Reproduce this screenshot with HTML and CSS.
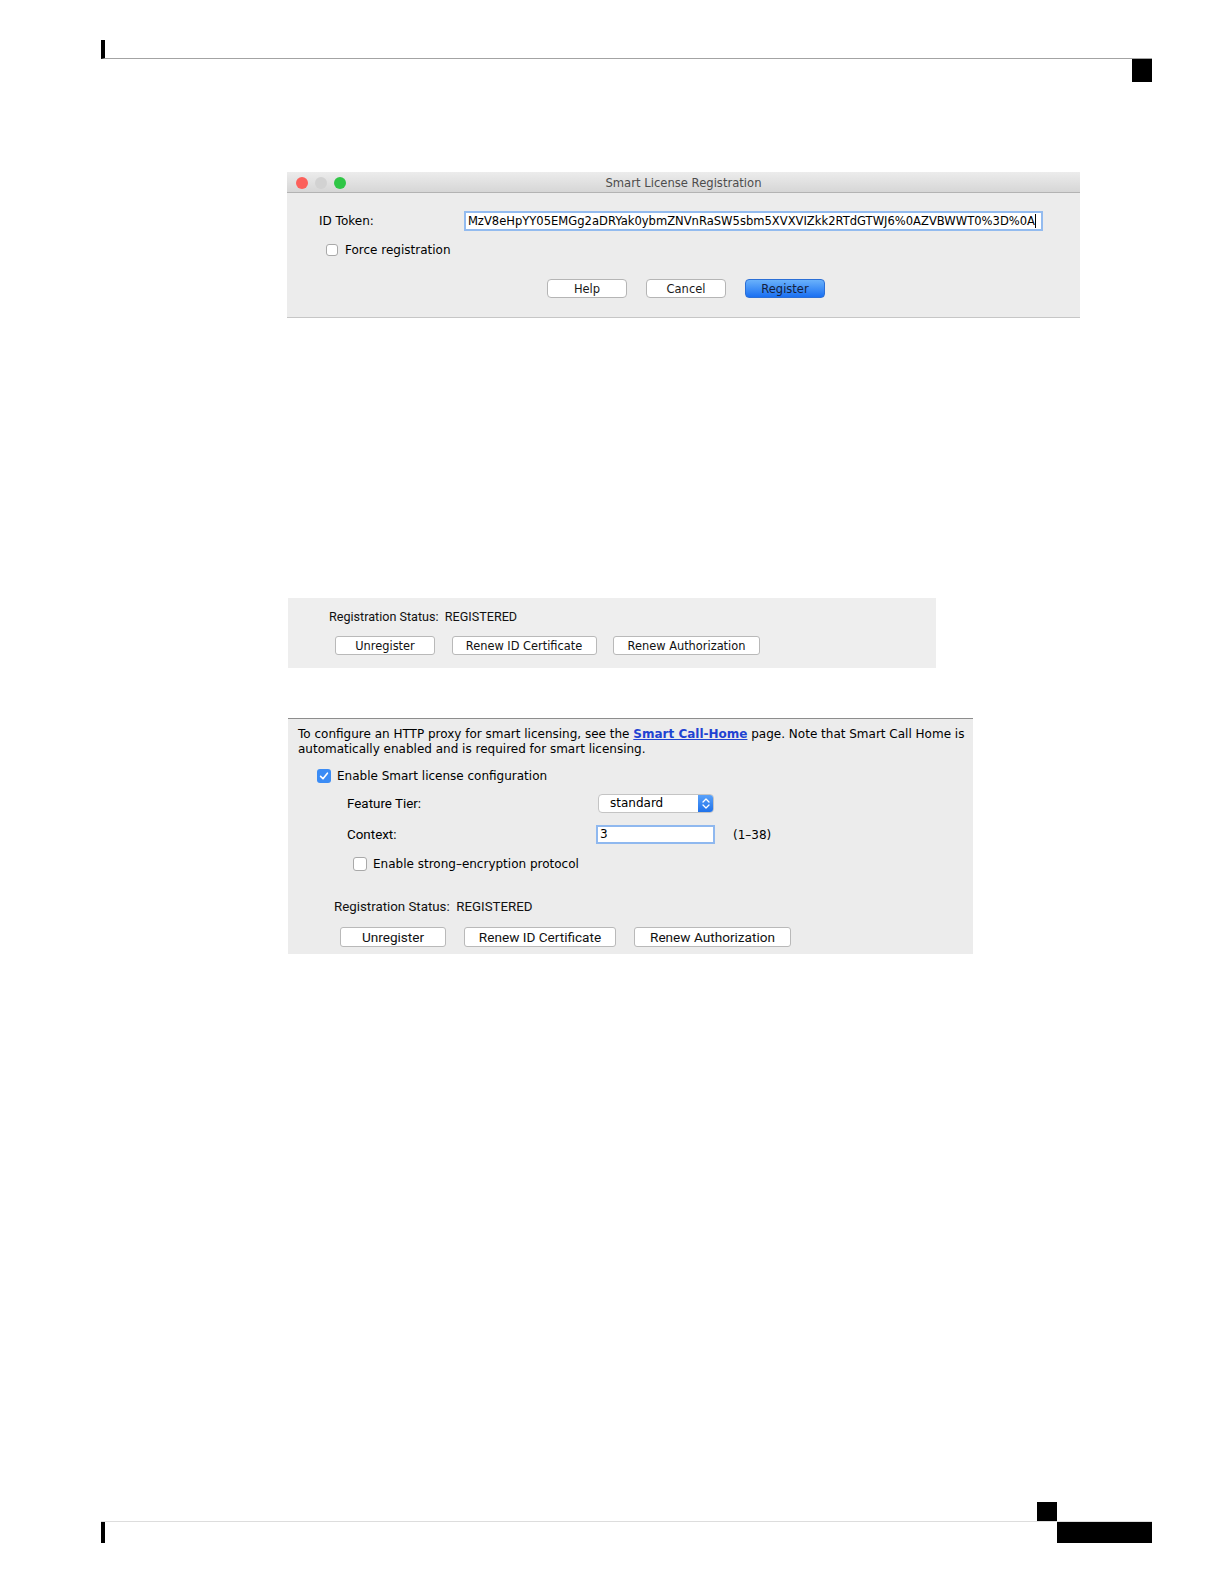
FILE: index.html
```html
<!DOCTYPE html>
<html lang="en">

<head>
    <meta charset="UTF-8">
    <meta name="viewport" content="width=device-width, initial-scale=1.0">
    <title>Smart License Registration</title>
    <link rel="stylesheet" href="styles.css">
</head>

<body>
    <!-- Page header rule -->
    <div class="page-head">
        <div class="head-rule"></div>
        <div class="head-tab"></div>
    </div>

    <div class="content">
        <!-- Smart License Registration dialog -->
        <div class="window">
            <div class="title-bar">
                <div class="lights">
                    <span class="light red"></span>
                    <span class="light grey"></span>
                    <span class="light green"></span>
                </div>
                <div class="title">Smart License Registration</div>
                <div></div>
            </div>

            <div class="window-body">
                <div class="token-row">
                    <span class="token-label">ID Token:</span>
                    <div class="token-input">
                        <span class="token-text">MzV8eHpYY05EMGg2aDRYak0ybmZNVnRaSW5sbm5XVXVIZkk2RTdGTWJ6%0AZVBWWT0%3D%0A</span>
                        <span class="caret"></span>
                    </div>
                </div>

                <div class="check-row force">
                    <span class="checkbox"></span>
                    <span>Force registration</span>
                </div>

                <div class="dialog-buttons">
                    <button class="mac-btn">Help</button>
                    <button class="mac-btn">Cancel</button>
                    <button class="mac-btn primary">Register</button>
                </div>
            </div>
        </div>

        <!-- Registration status panel -->
        <div class="status-panel">
            <div class="status-line">Registration Status:&nbsp; REGISTERED</div>
            <div class="status-buttons">
                <button class="panel-btn">Unregister</button>
                <button class="panel-btn">Renew ID Certificate</button>
                <button class="panel-btn">Renew Authorization</button>
            </div>
        </div>

        <!-- Smart license configuration panel -->
        <div class="config-panel">
            <p class="intro">To configure an HTTP proxy for smart licensing, see the <a href="#">Smart Call-Home</a> page. Note that Smart Call Home is<br>automatically enabled and is required for smart licensing.</p>

            <div class="check-row enable">
                <svg class="checked" width="14" height="14" viewBox="0 0 14 14">
                    <rect x="0" y="0" width="14" height="14" rx="3" fill="#3b8cf5"/>
                    <path d="M3.6 7.4 L6 9.8 L10.4 4.2" fill="none" stroke="#ffffff" stroke-width="1.6" stroke-linecap="round" stroke-linejoin="round"/>
                </svg>
                <span>Enable Smart license configuration</span>
            </div>

            <div class="config-form">
                <span class="form-label">Feature Tier:</span>
                <div class="select">
                    <span class="select-value">standard</span>
                    <svg class="stepper" width="16" height="19" viewBox="0 0 16 19">
                        <path d="M5 8 L8 5 L11 8" fill="none" stroke="#ffffff" stroke-width="1.3" stroke-linecap="round" stroke-linejoin="round"/>
                        <path d="M5 11 L8 14 L11 11" fill="none" stroke="#ffffff" stroke-width="1.3" stroke-linecap="round" stroke-linejoin="round"/>
                    </svg>
                </div>
                <span></span>

                <span class="form-label">Context:</span>
                <div class="context-input">3</div>
                <span class="range">(1&ndash;38)</span>
            </div>

            <div class="check-row encryption">
                <span class="checkbox"></span>
                <span>Enable strong&ndash;encryption protocol</span>
            </div>

            <div class="status-line config-status">Registration Status:&nbsp; REGISTERED</div>
            <div class="config-buttons">
                <button class="panel-btn big">Unregister</button>
                <button class="panel-btn big">Renew ID Certificate</button>
                <button class="panel-btn big">Renew Authorization</button>
            </div>
        </div>
    </div>

    <!-- Page footer rule -->
    <footer class="page-foot">
        <div class="foot-tab"></div>
        <div class="foot-rule">
            <div class="foot-bar"></div>
            <div class="foot-block"></div>
        </div>
    </footer>
</body>

</html>
```

FILE: styles.css
```css
/* Set the style of the entire page */
body {
    margin: 0;
    height: 1584px;
    display: flex;
    flex-direction: column;
    background-color: #ffffff;
    font-family: "DejaVu Sans", sans-serif;
    color: #000000;
}

/* Page header rule */
.page-head {
    margin: 40px 72px 0 101px;
}

.head-rule {
    height: 18px;
    border-left: 4px solid #000000;
    border-bottom: 1px solid #a3a3a3;
}

.head-tab {
    width: 20px;
    height: 23px;
    margin-left: auto;
    background-color: #000000;
}

/* Wrapper for the screenshots */
.content {
    margin-left: 287px;
}

/* Set the style of the dialog window */
.window {
    width: 793px;
    margin-top: 90px;
    background-color: #ececec;
    border-bottom: 1px solid #c6c6c6;
}

.title-bar {
    display: grid;
    grid-template-columns: 1fr auto 1fr;
    align-items: center;
    height: 20px;
    background: linear-gradient(#ececec, #d6d6d6);
    border-bottom: 1px solid #b3b3b3;
}

.lights {
    display: flex;
    gap: 7px;
    padding-left: 9px;
    padding-top: 1px;
}

.light {
    width: 12px;
    height: 12px;
    border-radius: 50%;
}

.light.red {
    background-color: #fc605b;
}

.light.grey {
    background-color: #d2d2d2;
}

.light.green {
    background-color: #2fc646;
}

.title {
    padding-top: 1px;
    font-size: 11.6px;
    color: #4d4d4d;
}

.window-body {
    padding: 18px 0 19px 32px;
}

.token-row {
    display: flex;
    align-items: center;
    font-size: 12px;
}

.token-label {
    width: 145px;
}

/* Focused text field with the token */
.token-input {
    width: 570px;
    height: 16px;
    padding-right: 5px;
    display: flex;
    align-items: center;
    justify-content: flex-end;
    overflow: hidden;
    white-space: nowrap;
    background-color: #ffffff;
    border: 2px solid #93bbef;
    font-size: 11.55px;
}

.caret {
    flex: none;
    width: 1px;
    height: 14px;
    background-color: #000000;
}

/* Checkbox rows */
.check-row {
    display: flex;
    align-items: center;
    gap: 7px;
    height: 12px;
    font-size: 12px;
}

.checkbox {
    flex: none;
    width: 10px;
    height: 10px;
    background-color: #ffffff;
    border: 1px solid #a9a9a9;
    border-radius: 3px;
}

.force {
    margin-top: 13px;
    padding-left: 7px;
}

.dialog-buttons {
    display: flex;
    gap: 19px;
    margin-top: 23px;
    margin-left: 228px;
}

/* Set the style of the dialog buttons */
.mac-btn {
    width: 80px;
    height: 19px;
    padding: 0;
    background-color: #ffffff;
    border: 1px solid #b5b5b5;
    border-radius: 4px;
    font-family: "DejaVu Sans", sans-serif;
    font-size: 11.5px;
    color: #1a1a1a;
}

.mac-btn.primary {
    background: linear-gradient(#69b1fb, #1a70f2);
    border-color: #2b6fd6;
    color: #14213d;
}

/* Registration status panel */
.status-panel {
    width: 607px;
    margin-top: 280px;
    margin-left: 1px;
    padding: 12px 0 13px 41px;
    background-color: #eeeeee;
}

.status-line {
    height: 14px;
    line-height: 14px;
    font-family: Roboto, "Liberation Sans", sans-serif;
    font-size: 12.6px;
    color: #111111;
}

.status-buttons {
    display: grid;
    grid-template-columns: 100px 145px 147px;
    column-gap: 16.5px;
    margin-top: 12px;
    margin-left: 6px;
}

.panel-btn {
    height: 19px;
    padding: 0;
    background-color: #ffffff;
    border: 1px solid #b9b9b9;
    border-radius: 3px;
    font-family: "DejaVu Sans", sans-serif;
    font-size: 11.4px;
    color: #111111;
}

/* Smart license configuration panel */
.config-panel {
    width: 675px;
    margin-top: 50px;
    margin-left: 1px;
    padding: 8px 0 7px 10px;
    background-color: #ececec;
    border-top: 1px solid #8d8d8d;
}

.intro {
    margin: 0;
    line-height: 15px;
    font-size: 12px;
    white-space: nowrap;
}

.intro a {
    font-weight: bold;
    color: #1f43d2;
}

.enable {
    height: 14px;
    gap: 6px;
    margin-top: 12px;
    margin-left: 19px;
}

.config-form {
    display: grid;
    grid-template-columns: 249px auto auto;
    justify-content: start;
    align-items: center;
    row-gap: 12px;
    margin-top: 11px;
    margin-left: 49px;
}

.form-label {
    font-family: Roboto, "Liberation Sans", sans-serif;
    font-size: 13.4px;
}

/* Popup selector */
.select {
    display: flex;
    width: 114px;
    height: 17px;
    margin-left: 2px;
    background-color: #ffffff;
    border: 1px solid #c4c4c4;
    border-radius: 4px;
    overflow: hidden;
}

.select-value {
    flex: 1;
    padding-left: 11px;
    line-height: 17px;
    font-size: 12px;
}

.stepper {
    margin: -1px -1px -1px 0;
    background: linear-gradient(#5ca4fb, #1c6fe9);
}

.context-input {
    width: 113px;
    height: 15px;
    padding-left: 2px;
    line-height: 15px;
    background-color: #ffffff;
    border: 2px solid #8fb8ef;
    font-size: 12px;
}

.range {
    margin-left: 18px;
    font-size: 12px;
}

.encryption {
    height: 14px;
    gap: 6px;
    margin-top: 13px;
    margin-left: 55px;
}

.encryption .checkbox {
    width: 12px;
    height: 12px;
}

.config-status {
    height: 16px;
    line-height: 16px;
    margin-top: 28px;
    margin-left: 36px;
    font-size: 13.3px;
}

.config-buttons {
    display: grid;
    grid-template-columns: 106px 152px 157px;
    column-gap: 18px;
    margin-top: 12px;
    margin-left: 42px;
}

.panel-btn.big {
    height: 20px;
    font-family: Roboto, "Liberation Sans", sans-serif;
    font-size: 13.6px;
}

/* Page footer rule */
.page-foot {
    margin: auto 72px 41px 101px;
}

.foot-tab {
    width: 20px;
    height: 19px;
    margin-left: 936px;
    background-color: #000000;
}

.foot-rule {
    display: flex;
    justify-content: space-between;
    border-top: 1px solid #dddddd;
}

.foot-bar {
    width: 4px;
    height: 21px;
    background-color: #000000;
}

.foot-block {
    width: 95px;
    height: 21px;
    background-color: #000000;
}
```
